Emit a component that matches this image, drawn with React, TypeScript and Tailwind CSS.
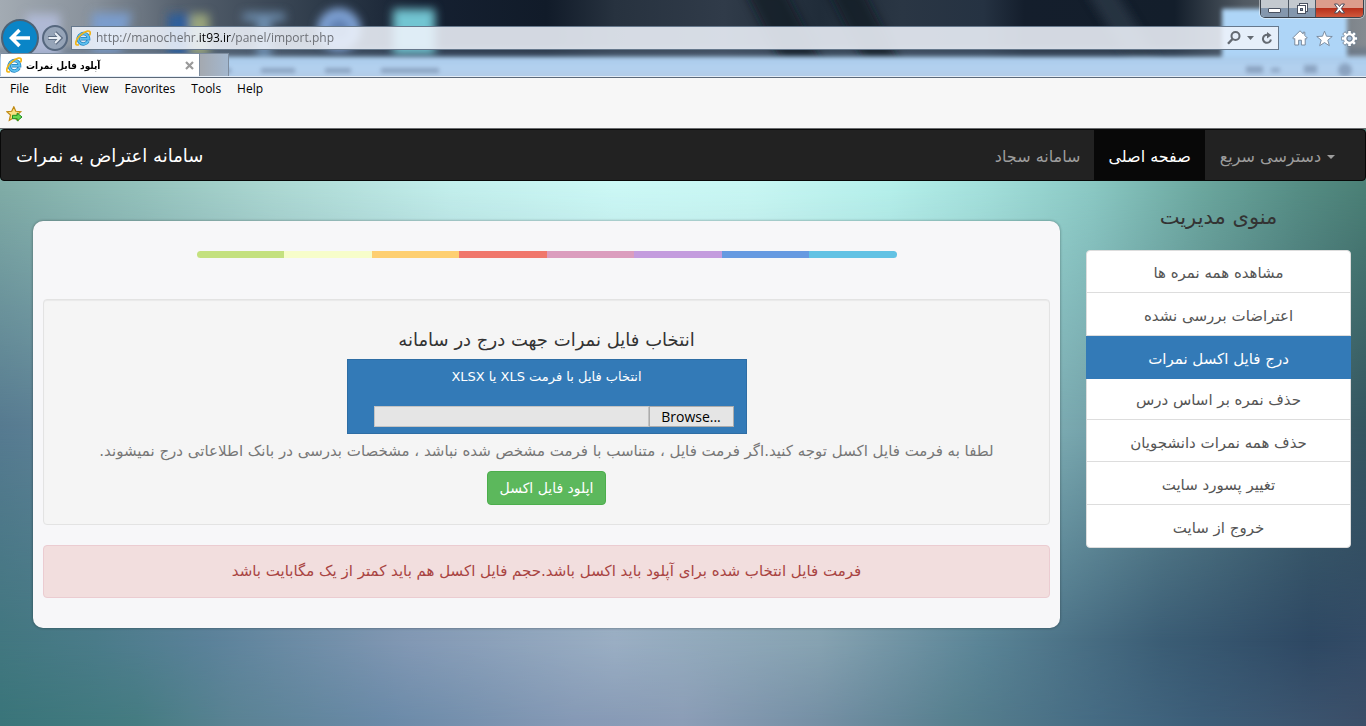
import React, { useRef, useState } from "react";

const menuItems = [
  "مشاهده همه نمره ها",
  "اعتراضات بررسی نشده",
  "درج فایل اکسل نمرات",
  "حذف نمره بر اساس درس",
  "حذف همه نمرات دانشجویان",
  "تغییر پسورد سایت",
  "خروج از سایت",
];

const stripes = [
  "bg-[#c4e17f]",
  "bg-[#f7fdca]",
  "bg-[#fecf71]",
  "bg-[#f0776c]",
  "bg-[#db9dbe]",
  "bg-[#c49cde]",
  "bg-[#669ae1]",
  "bg-[#62c2e4]",
];

function GlassBackdrop() {
  return (
    <svg
      aria-hidden="true"
      className="absolute inset-0 h-full w-full"
      viewBox="0 0 1366 78"
      preserveAspectRatio="none"
    >
      <defs>
        <linearGradient id="glass" x1="0" x2="1" y1="0" y2="0">
          <stop offset="0" stopColor="#a3abb3" />
          <stop offset="0.07" stopColor="#87909a" />
          <stop offset="0.13" stopColor="#56616e" />
          <stop offset="0.24" stopColor="#2c3948" />
          <stop offset="0.31" stopColor="#152031" />
          <stop offset="0.4" stopColor="#111b29" />
          <stop offset="0.45" stopColor="#27323f" />
          <stop offset="0.53" stopColor="#303b49" />
          <stop offset="0.6" stopColor="#202c39" />
          <stop offset="0.66" stopColor="#2a3644" />
          <stop offset="0.72" stopColor="#253242" />
          <stop offset="0.75" stopColor="#141e2c" />
          <stop offset="0.86" stopColor="#131e2b" />
          <stop offset="0.91" stopColor="#505962" />
          <stop offset="1" stopColor="#858b91" />
        </linearGradient>
        <linearGradient id="lower" x1="0" x2="0" y1="0" y2="1">
          <stop offset="0" stopColor="#a9cbea" />
          <stop offset="0.4" stopColor="#b3d1ef" />
          <stop offset="1" stopColor="#afc5df" />
        </linearGradient>
        <filter id="soft" x="-30%" y="-60%" width="160%" height="220%">
          <feGaussianBlur stdDeviation="5" />
        </filter>
        <filter id="edge" x="-5%" y="-40%" width="110%" height="180%">
          <feGaussianBlur stdDeviation="2" />
        </filter>
      </defs>
      <rect width="1366" height="78" fill="url(#glass)" />
      <rect x="-10" y="48" width="1390" height="9" fill="#5b6f86" opacity="0.45" filter="url(#edge)" />
      <g filter="url(#soft)">
        <path d="M745 -10h40l45 90h-40z" fill="#0d1722" opacity="0.7" />
        <path d="M828 -10h35l45 90h-35z" fill="#0d1722" opacity="0.7" />
        <path d="M1085 -10h30l55 90h-30z" fill="#34404e" opacity="0.6" />
        <rect x="26" y="14" width="34" height="45" fill="#b5bfe0" opacity="0.8" />
        <path d="M92 13h40l-12 40h-28z" fill="#7a9ccc" />
        <rect x="168" y="14" width="22" height="42" fill="#2d5f9c" />
        <rect x="190" y="14" width="19" height="42" fill="#9aa57c" />
        <path d="M243 13h42v8h-14v40h-14V21h-14z" fill="#6e8fb0" />
        <circle cx="339" cy="30" r="17" fill="#5f7fb0" stroke="#86abe0" strokeWidth="9" />
        <rect x="393" y="9" width="42" height="46" fill="#72c5d2" />
      </g>
      <rect x="1222" y="9" width="125" height="55" fill="#aed5f7" filter="url(#edge)" />
      <rect x="-10" y="57" width="1390" height="30" fill="url(#lower)" filter="url(#edge)" />
      <g filter="url(#edge)" fill="#6b7f9c" opacity="0.55">
        <rect x="205" y="69" width="26" height="5" />
        <rect x="261" y="69" width="34" height="5" />
        <rect x="325" y="69" width="26" height="5" />
        <rect x="381" y="69" width="58" height="5" />
        <rect x="1246" y="67" width="17" height="7" />
        <rect x="1271" y="69" width="9" height="4" />
        <rect x="1304" y="66" width="13" height="8" />
        <circle cx="1345" cy="71" r="7" />
      </g>
    </svg>
  );
}

function PageBackdrop() {
  return (
    <div aria-hidden="true" className="absolute inset-0 -z-10">
      <div className="absolute inset-0 bg-[linear-gradient(to_right,#3a757a_0%,#457c82_10%,#5a8394_17%,#6a8aa8_28%,#869ab6_42%,#8c9eb7_50%,#7590a5_60%,#57808f_70%,#466c84_80%,#3c5d78_88%,#3b4e68_100%)]" />
      <div className="absolute inset-0 bg-[linear-gradient(to_right,#427780_0%,#4a7b89_7%,#5a8199_15%,#8298b4_30%,#9aaec3_45%,#86a2b1_60%,#5a8496_72%,#3b5d75_85%,#2e4863_96%,#334b66_100%)] [mask-image:linear-gradient(to_bottom,black_86%,transparent_99%)]" />
      <div className="absolute inset-0 bg-[linear-gradient(to_right,#567a90_0%,#a5c6cf_50%,#7aa9b0_78%,#34545f_100%)] [mask-image:linear-gradient(to_bottom,black_50%,transparent_86%)]" />
      <div className="absolute inset-0 bg-[linear-gradient(to_right,#80aca6_0%,#94c2bb_10%,#acd8d2_20%,#c3efec_33%,#ccf9f6_45%,#c8f7f3_55%,#b5f0eb_65%,#a3e0db_72%,#8ac8c3_80%,#6ba79e_88%,#568e85_95%,#4b8076_100%)] [mask-image:linear-gradient(to_bottom,black_9%,transparent_50%)]" />
    </div>
  );
}

function ExplorerLogo() {
  return (
    <svg aria-hidden="true" viewBox="0 0 16 16" className="h-4 w-4 shrink-0">
      <path
        d="M13.1 11A5.200 5.200 0 1 1 13.600 8.700H5.500"
        fill="none"
        stroke="#1d7fbf"
        strokeWidth="3.400"
      />
      <path
        d="M13.1 11A5.200 5.200 0 1 1 13.600 8.700H5.500"
        fill="none"
        stroke="#5cbfee"
        strokeWidth="2"
      />
      <path
        d="M14.800 4.800C15.800 2.200 14.900.6 12.400 1.100 8.800 1.900 3.600 6 1.600 10.200.1 13.300.6 15.500 3.200 14.900"
        fill="none"
        stroke="#f0b416"
        strokeWidth="1.700"
        strokeLinecap="round"
      />
    </svg>
  );
}

function WindowButtons() {
  return (
    <div className="absolute top-0 right-[2px] flex h-[18px] overflow-hidden rounded-b-[5px] border border-t-0 border-[#3a424c] shadow-[0_0_0_1px_rgba(255,255,255,0.45)]">
      <button
        aria-label="Minimize"
        className="flex w-7 items-center justify-center border-r border-[#4c5662] bg-linear-to-b from-[#c3c9cf] from-50% to-[#8497ad] to-50%"
      >
        <svg viewBox="0 0 13 13" className="h-[13px] w-[13px]">
          <rect x="0.500" y="6.500" width="12" height="4" rx="0.500" fill="#fff" stroke="#4a5261" />
        </svg>
      </button>
      <button
        aria-label="Restore"
        className="flex w-[27px] items-center justify-center border-r border-[#4c5662] bg-linear-to-b from-[#c3c9cf] from-50% to-[#8497ad] to-50%"
      >
        <svg viewBox="0 0 13 13" className="h-[13px] w-[13px]" stroke="#4a5261">
          <rect x="3.500" y="1.500" width="8" height="8" fill="#fff" />
          <rect x="1.500" y="3.500" width="8" height="8" fill="#fff" />
          <rect x="4.500" y="6.500" width="2" height="2" fill="#8497ad" />
        </svg>
      </button>
      <button
        aria-label="Close"
        className="flex w-[47px] items-center justify-center bg-linear-to-b from-[#dc9c8c] from-45% via-[#b8301c] via-50% to-[#d0583c]"
      >
        <svg viewBox="0 0 13 13" className="h-[13px] w-[13px]">
          <path
            d="M1.500 2h3l2 2.500L8.500 2h3L8.300 6.500 11.500 11h-3l-2-2.500-2 2.500h-3l3.200-4.500z"
            fill="#fff"
            stroke="#4a4a5a"
          />
        </svg>
      </button>
    </div>
  );
}

function AddressRow() {
  return (
    <div className="relative mt-[19px] flex h-[38px] items-center pr-2 pl-px">
      <button
        aria-label="Back"
        className="flex h-[38px] w-[38px] shrink-0 items-center justify-center rounded-full border-2 border-[#4d6275] bg-[#0a85c7]"
      >
        <svg viewBox="0 0 22 20" className="h-5 w-[22px]" fill="none" stroke="#fff" strokeWidth="3.600">
          <path d="M21 10H3M10.500 2 2.500 10l8 8" />
        </svg>
      </button>
      <button
        aria-label="Forward"
        className="ml-[3px] flex h-[26px] w-[26px] shrink-0 items-center justify-center rounded-full border-2 border-[#56677e] bg-[#96a4b8]"
      >
        <svg viewBox="0 0 16 14" className="h-[14px] w-4" fill="none">
          <path d="M1 7h12M8 1.500 13.500 7 8 12.500" stroke="#5d6c82" strokeWidth="3.800" />
          <path d="M1.500 7h11.500M8 2 13 7 8 12" stroke="#e9eef5" strokeWidth="2" />
        </svg>
      </button>
      <div className="ml-[3px] flex h-6 min-w-0 flex-1 items-center border border-[#66788c] bg-[#eef2fa]/88 px-[3px] font-['Open_Sans',sans-serif] text-xs text-[#6d7076]">
        <ExplorerLogo />
        <span className="ml-[5px] min-w-0 flex-1 truncate">
          http://manochehr.<span className="text-black">it93.ir</span>/panel/import.php
        </span>
        <button aria-label="Search" className="mr-[6px]">
          <svg viewBox="0 0 14 14" className="h-[14px] w-[14px]" fill="none" stroke="#646a72" strokeWidth="2">
            <circle cx="8.500" cy="5" r="4" />
            <path d="M5.500 8 1 12.800" strokeWidth="2.400" />
          </svg>
        </button>
        <button aria-label="Address options" className="mr-[7px]">
          <svg viewBox="0 0 7 4" className="h-1 w-[7px]" fill="#646a72">
            <path d="M0 0h7L3.500 4z" />
          </svg>
        </button>
        <button aria-label="Refresh" className="mr-[2px]">
          <svg viewBox="0 0 12 13" className="h-[13px] w-3">
            <path d="M8 3.400A4 4 0 1 0 9.900 7.500" fill="none" stroke="#646a72" strokeWidth="2" />
            <path d="M6 0l4.500 3.200L6 6.400z" fill="#646a72" />
          </svg>
        </button>
      </div>
      <div className="ml-[13px] flex items-center gap-2">
        <button aria-label="Home">
          <svg viewBox="0 0 16 16" className="h-4 w-4" fill="#fff" stroke="#6f8093" strokeWidth="0.900">
            <path d="M8 .8.700 8l1.300 1.200.8-.7V15h3.800v-4.800h2.800V15h3.800V8.500l.8.700L15.300 8 12.800 5.500V2.200h-1.600v1.700z" />
          </svg>
        </button>
        <button aria-label="Favorites">
          <svg viewBox="0 0 18 17" className="h-[17px] w-[17px]" fill="#fff" stroke="#6f8093" strokeWidth="0.900">
            <path d="M9 .8l2.100 5.300 6.100.3-4.700 3.800 1.600 5.900L9 12.800l-5.100 3.300 1.600-5.900L.8 6.400l6.100-.3z" />
          </svg>
        </button>
        <button aria-label="Tools">
          <svg viewBox="-8.500 -8.500 17 17" className="h-[17px] w-[17px]">
            <g stroke="#6f8093" strokeWidth="4">
              <path d="M0-8.200V8.200M-8.200 0H8.200M-5.800-5.800 5.800 5.800M5.800-5.800-5.800 5.800" />
            </g>
            <circle r="5.600" fill="#fff" />
            <g stroke="#fff" strokeWidth="2.600">
              <path d="M0-7.600V7.600M-7.600 0H7.600M-5.400-5.400 5.400 5.400M5.400-5.400-5.400 5.400" />
            </g>
            <circle r="2.600" fill="#a9c4e0" stroke="#6f8093" strokeWidth="1.200" />
          </svg>
        </button>
      </div>
    </div>
  );
}

function BrowserChrome() {
  return (
    <header>
      <div className="relative h-[78px] overflow-hidden border-b border-[#5b6878]">
        <GlassBackdrop />
        <WindowButtons />
        <AddressRow />
        <div className="relative -mt-1 flex h-6 border-b border-[#e4edf7] pl-px">
          <div className="flex w-[199px] items-center border-t border-r border-[#7d8c9e] bg-white px-[5px]">
            <ExplorerLogo />
            <span dir="rtl" className="ml-1 font-['DejaVu_Sans_Condensed','DejaVu_Sans',sans-serif] text-[10px] font-bold text-black">
              آپلود فایل نمرات
            </span>
            <button aria-label="Close tab" className="ml-auto">
              <svg viewBox="0 0 9 9" className="h-[9px] w-[9px]" stroke="#9a9a9a" strokeWidth="2.200">
                <path d="M1 1l7 7M8 1 1 8" />
              </svg>
            </button>
          </div>
          <button
            aria-label="New tab"
            className="w-[29px] border-t border-r border-[#7d8c9e] bg-linear-to-r from-[#a4a9b0] to-[#a3b7ce]"
          />
        </div>
      </div>
      <div className="h-[51px] border-b border-[#6a6c6f] bg-[#f7f7f7]">
        <nav
          aria-label="Browser menu"
          className="flex h-[22px] items-center gap-4 pl-[10px] font-['Open_Sans',sans-serif] text-xs text-black"
        >
          <button>File</button>
          <button>Edit</button>
          <button>View</button>
          <button>Favorites</button>
          <button>Tools</button>
          <button>Help</button>
        </nav>
        <button aria-label="Add to favorites bar" className="mt-[6px] ml-[6px] block">
          <svg viewBox="0 0 17 16" className="h-4 w-[17px]">
            <path
              d="M7.800.8l2 4.500 4.900.4-3.700 3.300 1.200 5.400-4.400-2.600-4.500 2.600 1.200-5.400L.8 5.700l4.900-.4z"
              fill="#fbe183"
              stroke="#c08a14"
              strokeWidth="1.200"
            />
            <path d="M6.500 9.300h4.700V7l4.800 4-4.800 4v-2.300H6.500z" fill="#67d64f" stroke="#1f8f22" />
          </svg>
        </button>
      </div>
    </header>
  );
}

function SiteNav() {
  return (
    <nav
      aria-label="ناوبری سایت"
      className="flex h-[52px] items-stretch justify-between rounded border border-[#080808] bg-[#222] pr-[15px]"
    >
      <a href="#home" className="flex items-center px-[15px] pt-[2px] text-lg text-white">
        سامانه اعتراض به نمرات
      </a>
      <div className="flex text-base text-[#9d9d9d]">
        <a href="#sajad" className="flex items-center px-[14px] pt-[3px]">
          سامانه سجاد
        </a>
        <a href="#main" aria-current="page" className="flex items-center bg-[#080808] px-[14px] pt-[3px] text-white">
          صفحه اصلی
        </a>
        <button className="flex items-center gap-[6px] px-[15px] pt-[3px]">
          دسترسی سریع
          <span className="border-x-4 border-t-4 border-x-transparent border-t-[#9d9d9d]" />
        </button>
      </div>
    </nav>
  );
}

function FilePicker() {
  const picker = useRef<HTMLInputElement>(null);
  const [name, setName] = useState("");
  return (
    <div className="flex h-[75px] w-[400px] max-w-full flex-col items-center justify-between border border-[#2e6da4] bg-[#337ab7] pt-[5px] pr-3 pb-[6px] pl-[26px]">
      <label htmlFor="file-name" dir="rtl" className="pr-[14px] text-[13px] leading-6 text-white">
        انتخاب فایل با فرمت XLS یا XLSX
      </label>
      <div className="flex h-[21px] w-full">
        <input
          id="file-name"
          type="text"
          readOnly
          value={name}
          className="min-w-0 flex-1 border border-[#c3c3c3] bg-[#e5e5e5] px-1 text-sm text-black outline-none"
        />
        <button
          type="button"
          onClick={() => picker.current?.click()}
          className="w-[85px] border border-[#acacac] bg-[#e5e5e5] font-['Open_Sans',sans-serif] text-sm leading-[19px] text-black"
        >
          Browse...
        </button>
        <input
          ref={picker}
          type="file"
          aria-label="XLS / XLSX"
          className="hidden"
          onChange={(e) => setName(e.target.files?.[0]?.name ?? "")}
        />
      </div>
    </div>
  );
}

function UploadCard() {
  return (
    <section className="mt-10 min-w-0 flex-1 rounded-[10px] bg-[#f7f7f9] px-[10px] pt-[30px] pb-[30px] shadow-[0_0_3px_rgba(0,0,0,0.4)]">
      <div className="mx-auto flex h-[7px] w-[700px] max-w-full overflow-hidden rounded-[5px]">
        {stripes.map((color) => (
          <span key={color} className={`flex-1 ${color}`} />
        ))}
      </div>
      <form
        onSubmit={(e) => e.preventDefault()}
        className="mt-[41px] flex flex-col items-center rounded border border-[#e3e3e3] bg-[#f5f5f5] px-5 pt-[30px] pb-[19px] shadow-[inset_0_1px_1px_rgba(0,0,0,0.05)]"
      >
        <h2 dir="rtl" className="mb-[9px] text-lg leading-5 text-[#333]">
          انتخاب فایل نمرات جهت درج در سامانه
        </h2>
        <FilePicker />
        <p dir="rtl" className="mt-[6px] mb-2 text-center text-[15px] leading-[23px] text-[#777]">
          لطفا به فرمت فایل اکسل توجه کنید.اگر فرمت فایل ، متناسب با فرمت مشخص شده نباشد ، مشخصات بدرسی در بانک اطلاعاتی درج نمیشوند.
        </p>
        <button
          type="submit"
          dir="rtl"
          className="h-[34px] rounded border border-[#4cae4c] bg-[#5cb85c] px-3 text-sm text-white"
        >
          اپلود فایل اکسل
        </button>
      </form>
      <div
        role="alert"
        dir="rtl"
        className="mt-5 rounded border border-[#ebccd1] bg-[#f2dede] p-[15px] text-center text-[15px] leading-[21px] text-[#a94442]"
      >
        فرمت فایل انتخاب شده برای آپلود باید اکسل باشد.حجم فایل اکسل هم باید کمتر از یک مگابایت باشد
      </div>
    </section>
  );
}

function SideMenu() {
  return (
    <aside className="w-[265px] shrink-0">
      <h2 className="mt-5 mb-[17px] text-center text-[21px] leading-8 text-[#333]">منوی مدیریت</h2>
      <nav
        aria-label="منوی مدیریت"
        dir="rtl"
        className="grid h-[298px] grid-rows-7 rounded border border-[#ddd] bg-white text-[15px] text-[#555]"
      >
        {menuItems.map((item, i) => (
          <a
            key={item}
            href={`#item-${i + 1}`}
            aria-current={i === 2 ? "page" : undefined}
            className={
              i === 2
                ? "-mx-px -mb-px flex items-center justify-center bg-[#337ab7] pt-1 text-white"
                : "flex items-center justify-center border-b border-[#ddd] pt-1 last:border-b-0"
            }
          >
            {item}
          </a>
        ))}
      </nav>
    </aside>
  );
}

export default function App() {
  return (
    <div className="flex min-h-screen flex-col">
      <BrowserChrome />
      <div className="relative isolate flex-1 pb-8 font-['DejaVu_Sans',sans-serif]">
        <PageBackdrop />
        <SiteNav />
        <main className="flex items-start gap-[26px] pr-[15px] pl-[33px]">
          <UploadCard />
          <SideMenu />
        </main>
      </div>
    </div>
  );
}
